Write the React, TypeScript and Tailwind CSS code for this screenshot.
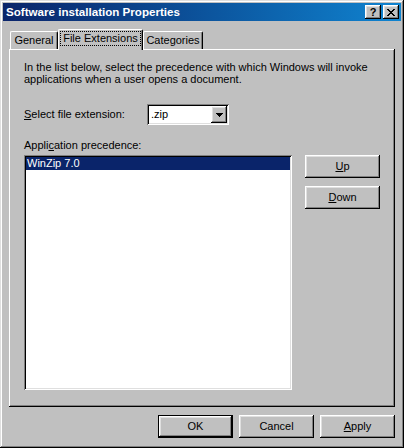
import React from 'react';

const raised =
  'shadow-[inset_-1px_-1px_#000,inset_1px_1px_#fff,inset_-2px_-2px_#808080,inset_2px_2px_#dfdfdf]';
const sunken =
  'shadow-[inset_1px_1px_#808080,inset_-1px_-1px_#fff,inset_2px_2px_#000,inset_-2px_-2px_#dfdfdf]';

function Btn({ children, isDefault = false }: { children: React.ReactNode; isDefault?: boolean }) {
  if (isDefault) {
    return (
      <div className="w-[75px] h-[23px] border border-black">
        <div className={`w-full h-full bg-[#c0c0c0] flex items-center justify-center ${raised}`}>
          {children}
        </div>
      </div>
    );
  }
  return (
    <div className={`w-[75px] h-[23px] bg-[#c0c0c0] flex items-center justify-center ${raised}`}>
      {children}
    </div>
  );
}

function TitleButton({ children }: { children: React.ReactNode }) {
  return (
    <div className={`w-[16px] h-[14px] bg-[#c0c0c0] flex items-center justify-center ${raised}`}>
      {children}
    </div>
  );
}

export default function App() {
  return (
    <div className="w-[404px] h-[448px] bg-[#c0c0c0] p-[3px] flex flex-col font-['Liberation_Sans',Arial,sans-serif] text-[11px] text-black shadow-[inset_-1px_-1px_#000,inset_1px_1px_#dfdfdf,inset_-2px_-2px_#808080,inset_2px_2px_#fff]">
      {/* title bar */}
      <div className="h-[18px] flex items-center pl-[3px] pr-[2px] bg-gradient-to-r from-[#0a246a] to-[#1084d0]">
        <span className="text-white font-bold text-[11.6px] leading-none">Software installation Properties</span>
        <div className="ml-auto flex">
          <TitleButton>
            <span className="font-bold text-[11px] leading-none mt-[1px]">?</span>
          </TitleButton>
          <div className="w-[2px]" />
          <TitleButton>
            <svg width="8" height="7" viewBox="0 0 8 7" shapeRendering="crispEdges">
              <path d="M0 0h2v1h-2zM6 0h2v1h-2zM1 1h2v1h-2zM5 1h2v1h-2zM2 2h4v1h-4zM3 3h2v1h-2zM2 4h4v1h-4zM1 5h2v1h-2zM5 5h2v1h-2zM0 6h2v1h-2zM6 6h2v1h-2z" fill="#000" />
            </svg>
          </TitleButton>
        </div>
      </div>

      {/* tabs */}
      <div className="mt-[7px] ml-[7px] flex items-end h-[21px]">
        <div className="w-[48px] h-[18px] rounded-t-[2px] border-t border-l border-white border-r border-r-black shadow-[inset_-1px_0_#808080] flex items-center justify-center">
          General
        </div>
        <div className="relative z-10 -mb-[1px] w-[85px] h-[21px] bg-[#c0c0c0] rounded-t-[2px] border-t border-l border-white border-r border-r-black shadow-[inset_-1px_0_#808080] flex items-start justify-center pt-[2px]">
          <span className="outline outline-1 outline-dotted outline-black px-[2px] leading-[13px]">File Extensions</span>
        </div>
        <div className="w-[60px] h-[18px] rounded-t-[2px] border-t border-l border-white border-r border-r-black shadow-[inset_-1px_0_#808080] flex items-center justify-center">
          Categories
        </div>
      </div>

      {/* panel */}
      <div className="ml-[6px] mr-[6px] h-[358px] flex flex-col px-[15px] pt-[12px] shadow-[inset_-1px_-1px_#000,inset_1px_1px_#fff,inset_-2px_-2px_#808080]">
        <p className="leading-[12px] w-[360px]">
          In the list below, select the precedence with which Windows will invoke applications when a user opens a
          document.
        </p>

        <div className="mt-[19px] flex items-center">
          <span className="w-[123px]">
            <span className="underline">S</span>elect file extension:
          </span>
          <div className={`w-[82px] h-[21px] bg-white flex items-center pl-[3px] pr-[2px] ${sunken}`}>
            <span className="px-[1px]">.zip</span>
            <div className={`ml-auto w-[16px] h-[17px] bg-[#c0c0c0] flex items-center justify-center ${raised}`}>
              <svg width="7" height="4" viewBox="0 0 7 4" shapeRendering="crispEdges">
                <path d="M0 0h7v1h-7zM1 1h5v1h-5zM2 2h3v1h-3zM3 3h1v1h-1z" fill="#000" />
              </svg>
            </div>
          </div>
        </div>

        <div className="mt-[14px] leading-[13px]">
          Appli<span className="underline">c</span>ation precedence:
        </div>

        <div className="mt-[3px] flex">
          <div className={`w-[269px] h-[235px] bg-white p-[2px] ${sunken}`}>
            <div className="h-[13px] bg-[#0a246a] text-white leading-[13px] pl-[1px]">WinZip 7.0</div>
          </div>
          <div className="ml-[13px] flex flex-col gap-[8px]">
            <Btn>
              <span className="underline">U</span>p
            </Btn>
            <Btn>
              <span className="underline">D</span>own
            </Btn>
          </div>
        </div>
      </div>

      {/* bottom buttons */}
      <div className="mt-[8px] mr-[6px] flex justify-end gap-[6px]">
        <Btn isDefault>OK</Btn>
        <Btn>Cancel</Btn>
        <Btn>
          <span className="underline">A</span>pply
        </Btn>
      </div>
    </div>
  );
}
